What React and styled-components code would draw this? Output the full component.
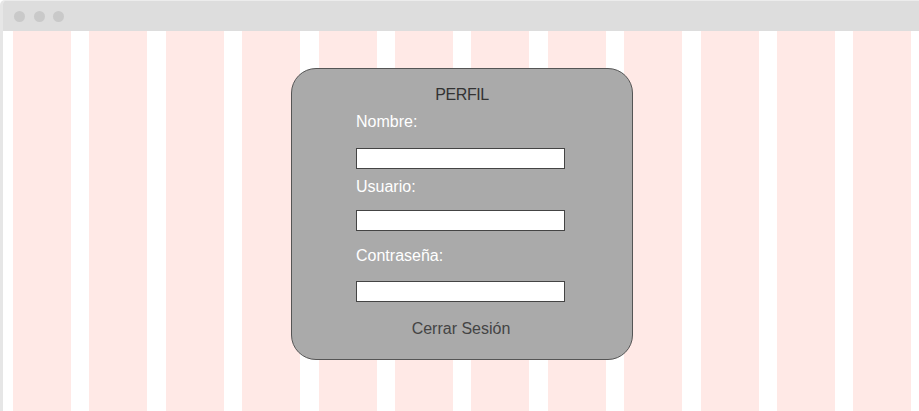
import React from "react";
import styled, { createGlobalStyle } from "styled-components";

const GlobalStyle = createGlobalStyle`
  html, body { margin: 0; padding: 0; background: #ffffff; overflow: hidden; }
  body { font-family: "Liberation Sans", Arial, sans-serif; }
`;

const Frame = styled.div`
  width: 919px;
  height: 411px;
  box-sizing: border-box;
  border-top: 1px solid #ececec;
  border-left: 3px solid #e6e6e6;
  border-top-left-radius: 5px;
  display: flex;
  flex-direction: column;
  overflow: hidden;
`;

const TitleBar = styled.div`
  height: 30px;
  flex: none;
  background: #dddddd;
  display: flex;
  align-items: center;
  gap: 8.5px;
  margin-left: -3px;
  padding-left: 14px;
`;

const Dot = styled.span`
  width: 11px;
  height: 11px;
  border-radius: 50%;
  background: #c9c9c9;
`;

const Canvas = styled.div`
  position: relative;
  flex: 1;
  background: #ffffff;
`;

const Columns = styled.div`
  height: 100%;
  display: grid;
  grid-template-columns: repeat(12, 58px);
  column-gap: 18.4px;
  padding-left: 10px;
`;

const Column = styled.div`
  background: #ffe9e6;
`;

const Card = styled.div`
  position: absolute;
  left: 288px;
  top: 37px;
  width: 342px;
  height: 292px;
  box-sizing: border-box;
  background: #aaaaaa;
  border: 1px solid #555555;
  border-radius: 25px;
  padding: 16px 0 0 64px;
  display: flex;
  flex-direction: column;
  align-items: flex-start;
`;

const Title = styled.div`
  align-self: stretch;
  margin-left: -64px;
  text-align: center;
  font-size: 16px;
  letter-spacing: -0.4px;
  line-height: 20px;
  color: #333333;
`;

const Label = styled.div`
  margin-top: ${(p) => p.$top}px;
  font-size: 16px;
  line-height: 20px;
  color: #ffffff;
`;

const Input = styled.input`
  margin: ${(p) => p.$top}px 0 0 0;
  width: 209px;
  height: 21px;
  box-sizing: border-box;
  border: 1px solid #444444;
  background: #ffffff;
  padding: 0 4px;
  outline: none;
  font-family: inherit;
`;

const Logout = styled.div`
  align-self: stretch;
  margin: 17px 0 0 -66px;
  text-align: center;
  font-size: 16px;
  line-height: 20px;
  color: #444444;
`;

const fields = [
  { label: "Nombre:", top: 7, gap: 16 },
  { label: "Usuario:", top: 8, gap: 13 },
  { label: "Contraseña:", top: 15, gap: 15 },
];

export default function App() {
  return (
    <>
      <GlobalStyle />
      <Frame>
        <TitleBar>
          <Dot />
          <Dot />
          <Dot />
        </TitleBar>
        <Canvas>
          <Columns>
            {Array.from({ length: 12 }).map((_, i) => (
              <Column key={i} />
            ))}
          </Columns>
          <Card>
            <Title>PERFIL</Title>
            {fields.map((f) => (
              <React.Fragment key={f.label}>
                <Label $top={f.top}>{f.label}</Label>
                <Input $top={f.gap} type="text" />
              </React.Fragment>
            ))}
            <Logout>Cerrar Sesión</Logout>
          </Card>
        </Canvas>
      </Frame>
    </>
  );
}
